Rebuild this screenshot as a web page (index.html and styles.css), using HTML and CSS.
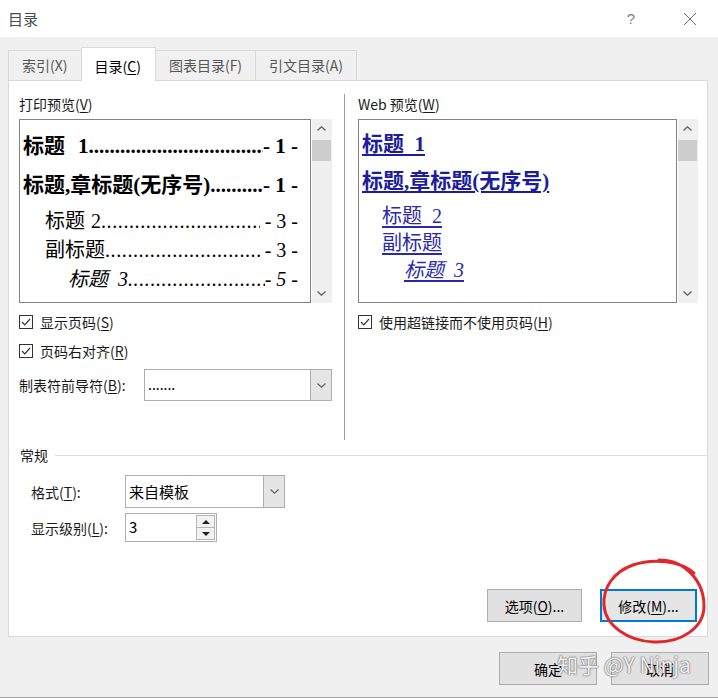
FILE: index.html
```html
<!DOCTYPE html>
<html lang="zh-CN">
<head>
    <meta charset="UTF-8">
    <title>目录</title>
    <link rel="stylesheet" href="styles.css">
</head>
<body>
<div class="window">

    <!-- Title bar -->
    <header class="titlebar">
        <span class="title">目录</span>
        <span class="tb-help">?</span>
        <span class="tb-close">
            <svg viewBox="0 0 14 14"><path d="M1 1 L13 13 M13 1 L1 13"/></svg>
        </span>
    </header>

    <div class="main">
        <nav class="tabs">
            <span class="tab">索引(X)</span>
            <span class="tab active">目录(<u>C</u>)</span>
            <span class="tab">图表目录(F)</span>
            <span class="tab">引文目录(A)</span>
        </nav>

        <section class="panel">
            <div class="columns">

                <!-- Print preview column -->
                <div class="col-left">
                    <div class="label">打印预览(<u>V</u>)</div>
                    <div class="preview">
                        <div class="page print">
                            <div class="toc l1"><span class="txt">标题<span class="num">1</span></span><span class="leader"></span><span class="pg">- 1 -</span></div>
                            <div class="toc l2"><span class="txt">标题,章标题(无序号)</span><span class="leader"></span><span class="pg">- 1 -</span></div>
                            <div class="toc l3"><span class="txt">标题<span class="num">2</span></span><span class="leader"></span><span class="pg">&nbsp;- 3 -</span></div>
                            <div class="toc l4"><span class="txt">副标题</span><span class="leader"></span><span class="pg">&nbsp;- 3 -</span></div>
                            <div class="toc l5"><span class="txt">标题<span class="num">3</span></span><span class="leader"></span><span class="pg">- 5 -</span></div>
                        </div>
                        <div class="scrollbar">
                            <svg class="sb-arrow" viewBox="0 0 9 5"><polyline points="0.5,4.5 4.5,0.8 8.5,4.5"/></svg>
                            <div class="thumb"></div>
                            <svg class="sb-arrow down" viewBox="0 0 9 5"><polyline points="0.5,0.5 4.5,4.2 8.5,0.5"/></svg>
                        </div>
                    </div>

                    <div class="check first">
                        <span class="box"><svg viewBox="0 0 12 12"><polyline points="2,6 4.8,8.8 10,3"/></svg></span>
                        显示页码(<u>S</u>)
                    </div>
                    <div class="check">
                        <span class="box"><svg viewBox="0 0 12 12"><polyline points="2,6 4.8,8.8 10,3"/></svg></span>
                        页码右对齐(<u>R</u>)
                    </div>

                    <div class="field leader-field">
                        <span class="field-label">制表符前导符(<u>B</u>):</span>
                        <div class="combo leader-combo">
                            <span class="combo-value">.......</span>
                            <span class="combo-btn"><svg viewBox="0 0 9 5"><polyline points="0.5,0.5 4.5,4.2 8.5,0.5"/></svg></span>
                        </div>
                    </div>
                </div>

                <!-- Web preview column -->
                <div class="col-right">
                    <div class="label">Web 预览(<u>W</u>)</div>
                    <div class="preview">
                        <div class="page web">
                            <div class="wl w1"><a>标题&nbsp;&nbsp;1</a></div>
                            <div class="wl w2"><a>标题,章标题(无序号)</a></div>
                            <div class="wl w3"><a>标题&nbsp;&nbsp;2</a></div>
                            <div class="wl w4"><a>副标题</a></div>
                            <div class="wl w5"><a>标题&nbsp;&nbsp;3</a></div>
                        </div>
                        <div class="scrollbar">
                            <svg class="sb-arrow" viewBox="0 0 9 5"><polyline points="0.5,4.5 4.5,0.8 8.5,4.5"/></svg>
                            <div class="thumb"></div>
                            <svg class="sb-arrow down" viewBox="0 0 9 5"><polyline points="0.5,0.5 4.5,4.2 8.5,0.5"/></svg>
                        </div>
                    </div>

                    <div class="check first">
                        <span class="box"><svg viewBox="0 0 12 12"><polyline points="2,6 4.8,8.8 10,3"/></svg></span>
                        使用超链接而不使用页码(<u>H</u>)
                    </div>
                </div>
            </div>

            <!-- General -->
            <div class="group-title">常规</div>
            <div class="form-row format-row">
                <span class="field-label">格式(<u>T</u>):</span>
                <div class="combo format-combo">
                    <span class="combo-value">来自模板</span>
                    <span class="combo-btn"><svg viewBox="0 0 9 5"><polyline points="0.5,0.5 4.5,4.2 8.5,0.5"/></svg></span>
                </div>
            </div>
            <div class="form-row level-row">
                <span class="field-label">显示级别(<u>L</u>):</span>
                <div class="spin">
                    <span class="spin-value">3</span>
                    <span class="spin-btns">
                        <span class="spin-btn"><svg viewBox="0 0 8 4"><polygon points="0,4 4,0 8,4"/></svg></span>
                        <span class="spin-btn"><svg viewBox="0 0 8 4"><polygon points="0,0 8,0 4,4"/></svg></span>
                    </span>
                </div>
            </div>

            <div class="actions">
                <button class="btn btn-options">选项(<u>O</u>)...</button>
                <button class="btn btn-modify focus">修改(<u>M</u>)...</button>
            </div>
        </section>
    </div>

    <footer class="footer">
        <button class="btn">确定</button>
        <button class="btn">取消</button>
    </footer>
</div>

<!-- hand-drawn annotation and watermark over the screenshot -->
<svg class="annotation" viewBox="0 0 120 92">
    <path d="M97 18 C84 6 56 3 36 10 C16 17 6 33 7 50 C8 70 30 86 57 87 C84 88 107 73 107 51 C107 36 101 23 88 13 C80 7 70 5 62 5"/>
</svg>
<div class="watermark">知乎 @Y Ninja</div>
</body>
</html>
```

FILE: styles.css
```css
/* Base */
* {
    box-sizing: border-box;
}

body {
    margin: 0;
    width: 718px;
    height: 698px;
    position: relative;
    overflow: hidden;
    background: #f0f0f0;
    font-family: "Noto Sans CJK SC", "Microsoft YaHei", sans-serif;
    font-size: 14px;
    line-height: 20px;
    color: #1a1a1a;
}

u {
    text-decoration: underline;
    text-underline-offset: 2px;
}

.window {
    height: 698px;
    display: flex;
    flex-direction: column;
    border-bottom: 1px solid #a0a0a0;
}

/* Title bar */
.titlebar {
    height: 37px;
    flex: none;
    display: flex;
    align-items: center;
    padding: 0 21px 0 8px;
    background: #fff;
}

.title {
    font-size: 15px;
    color: #4a4a4a;
}

.tb-help {
    margin-left: auto;
    width: 14px;
    text-align: center;
    font-family: "Liberation Sans", sans-serif;
    font-size: 15px;
    color: #808080;
}

.tb-close {
    margin-left: 45px;
    width: 14px;
    height: 14px;
    display: flex;
}

.tb-close svg {
    width: 14px;
    height: 14px;
    stroke: #707070;
    stroke-width: 1;
    fill: none;
}

/* Tabs + panel */
.main {
    padding: 10px 10px 0 8px;
}

.tabs {
    height: 33px;
    display: flex;
    align-items: flex-end;
}

.tab {
    height: 30px;
    padding: 0 13px 0 13px;
    margin-right: -1px;
    border: 1px solid #d9d9d9;
    border-bottom: none;
    background: #f0f0f0;
    color: #555;
    line-height: 28px;
}

.tab.active {
    height: 34px;
    margin-bottom: -1px;
    padding: 3px 14px 0 13px;
    position: relative;
    z-index: 1;
    background: #fff;
    color: #000;
    line-height: 30px;
}

.panel {
    height: 557px;
    display: flex;
    flex-direction: column;
    padding: 13px 9px 14px 10px;
    border: 1px solid #d9d9d9;
    background: #fff;
}

.columns {
    height: 346px;
    display: flex;
}

.col-left {
    width: 313px;
}

.col-right {
    flex: 1;
    margin-left: 12px;
    padding-left: 13px;
    border-left: 1px solid #a0a0a0;
}

.label {
    color: #1a1a1a;
}

/* Preview boxes */
.preview {
    height: 184px;
    margin-top: 5px;
    display: flex;
}

.page {
    flex: 1;
    min-width: 0;
    overflow: hidden;
    border: 1px solid #828282;
    background: #fff;
}

.scrollbar {
    width: 20px;
    margin-left: 1px;
    padding: 7px 1px 7px 0;
    display: flex;
    flex-direction: column;
    align-items: center;
    background: #f0f0f0;
}

.sb-arrow {
    width: 9px;
    height: 5px;
    flex: none;
    fill: none;
    stroke: #606060;
    stroke-width: 1.3;
}

.sb-arrow.down {
    margin-top: auto;
}

.thumb {
    width: 100%;
    height: 21px;
    margin-top: 9px;
    background: #cdcdcd;
}

/* Print preview lines */
.print {
    padding: 12px 12px 0 3px;
}

.toc {
    display: flex;
    white-space: nowrap;
    font-family: "Liberation Serif", "Noto Sans CJK SC", serif;
    color: #000;
}

.toc .leader {
    flex: 1;
    min-width: 0;
    overflow: hidden;
}

.toc .leader::after {
    content: "............................................................................................................";
}

.toc .num {
    margin-left: 13px;
}

.l1, .l2 {
    font-size: 21px;
    font-weight: bold;
    line-height: 28px;
}

.l2 {
    margin-top: 11px;
}

.l3, .l4, .l5 {
    font-size: 20px;
    line-height: 29px;
    padding-left: 22px;
}

.l3 {
    margin-top: 8px;
}

.l3 .num {
    margin-left: 6px;
}

.l3 .leader, .l4 .leader, .l5 .leader {
    letter-spacing: 0.6px;
}

.l5 {
    padding-left: 45px;
    font-style: italic;
}

.l5 .num {
    margin-left: 10px;
}

/* Web preview lines */
.web {
    padding: 12px 0 0 3px;
    font-family: "Liberation Serif", "Noto Sans CJK SC", serif;
}

.wl a {
    color: #2a2aa8;
    text-decoration: underline;
    text-underline-offset: 3px;
}

.w1, .w2 {
    font-size: 21px;
    font-weight: bold;
    line-height: 24px;
}

.w1 a, .w2 a {
    color: #1c1c9c;
}

.w2 {
    margin-top: 13px;
}

.w3, .w4, .w5 {
    font-size: 20px;
    line-height: 27px;
    padding-left: 20px;
}

.w3 {
    margin-top: 10px;
}

.w5 {
    padding-left: 42px;
    font-style: italic;
}

/* Checkboxes */
.check {
    height: 20px;
    margin-top: 9px;
    display: flex;
    align-items: center;
}

.box {
    width: 14px;
    height: 14px;
    margin-right: 7px;
    display: flex;
    border: 1px solid #333;
    background: #fff;
}

.box svg {
    width: 12px;
    height: 12px;
    fill: none;
    stroke: #333;
    stroke-width: 1.2;
}

/* Combo boxes */
.field {
    display: flex;
    align-items: center;
    margin-top: 8px;
}

.leader-field .field-label {
    width: 125px;
}

.combo {
    height: 33px;
    display: flex;
    border: 1px solid #adadad;
    background: #fff;
}

.combo-value {
    flex: 1;
    padding-left: 3px;
    line-height: 31px;
    color: #000;
}

.combo-btn {
    width: 21px;
    display: flex;
    align-items: center;
    justify-content: center;
    border-left: 1px solid #adadad;
    background: #e5e5e5;
}

.combo-btn svg {
    width: 9px;
    height: 5px;
    fill: none;
    stroke: #606060;
    stroke-width: 1.1;
}

.leader-combo {
    width: 188px;
    height: 32px;
}

.leader-combo .combo-value {
    line-height: 28px;
}

.format-combo {
    width: 160px;
    font-size: 15px;
}

/* General section */
.group-title {
    display: flex;
    align-items: center;
    margin: 5px -9px 0 0;
    padding-left: 1px;
}

.group-title::after {
    content: "";
    flex: 1;
    margin-left: 7px;
    border-top: 1px solid #dcdcdc;
}

.form-row {
    display: flex;
    align-items: center;
    margin-left: 12px;
}

.form-row .field-label {
    width: 94px;
}

.format-row {
    margin-top: 10px;
}

.level-row {
    margin-top: 5px;
}

.spin {
    width: 92px;
    height: 29px;
    display: flex;
    border: 1px solid #adadad;
    background: #fff;
}

.spin-value {
    flex: 1;
    padding-left: 3px;
    line-height: 26px;
    font-size: 15px;
    color: #000;
}

.spin-btns {
    width: 20px;
    display: flex;
    flex-direction: column;
    padding: 1px 1px 1px 0;
}

.spin-btn {
    flex: 1;
    display: flex;
    align-items: center;
    justify-content: center;
    border: 1px solid #b5b5b5;
    background: #f2f2f2;
}

.spin-btn + .spin-btn {
    border-top: none;
}

.spin-btn svg {
    width: 8px;
    height: 4px;
    fill: #222;
}

/* Buttons */
.btn {
    height: 33px;
    padding: 0;
    display: flex;
    align-items: center;
    justify-content: center;
    border: 1px solid #adadad;
    background: #e1e1e1;
    font-family: inherit;
    font-size: 14px;
    color: #000;
}

.btn.focus {
    border: 2px solid #0078d7;
    background: #e5e5e5;
}

.actions {
    margin-top: auto;
    display: flex;
    justify-content: flex-end;
    gap: 18px;
    padding-right: 1px;
}

.btn-options {
    width: 95px;
}

.btn-modify {
    width: 97px;
}

.footer {
    display: flex;
    justify-content: flex-end;
    gap: 14px;
    padding: 15px 9px 0 0;
}

.footer .btn {
    width: 98px;
}

/* Overlays */
.annotation {
    position: absolute;
    left: 597px;
    top: 555px;
    width: 120px;
    height: 92px;
    fill: none;
    stroke: #e0282c;
    stroke-width: 3;
    stroke-linecap: round;
}

.watermark {
    position: absolute;
    left: 557px;
    top: 649px;
    white-space: nowrap;
    font-family: "Noto Sans CJK SC", "Liberation Sans", sans-serif;
    font-size: 21px;
    line-height: 30px;
    color: rgba(255, 255, 255, 0.92);
    text-shadow: 0 0 1px #555, 0 0 2px rgba(0, 0, 0, 0.5);
    pointer-events: none;
}
```
